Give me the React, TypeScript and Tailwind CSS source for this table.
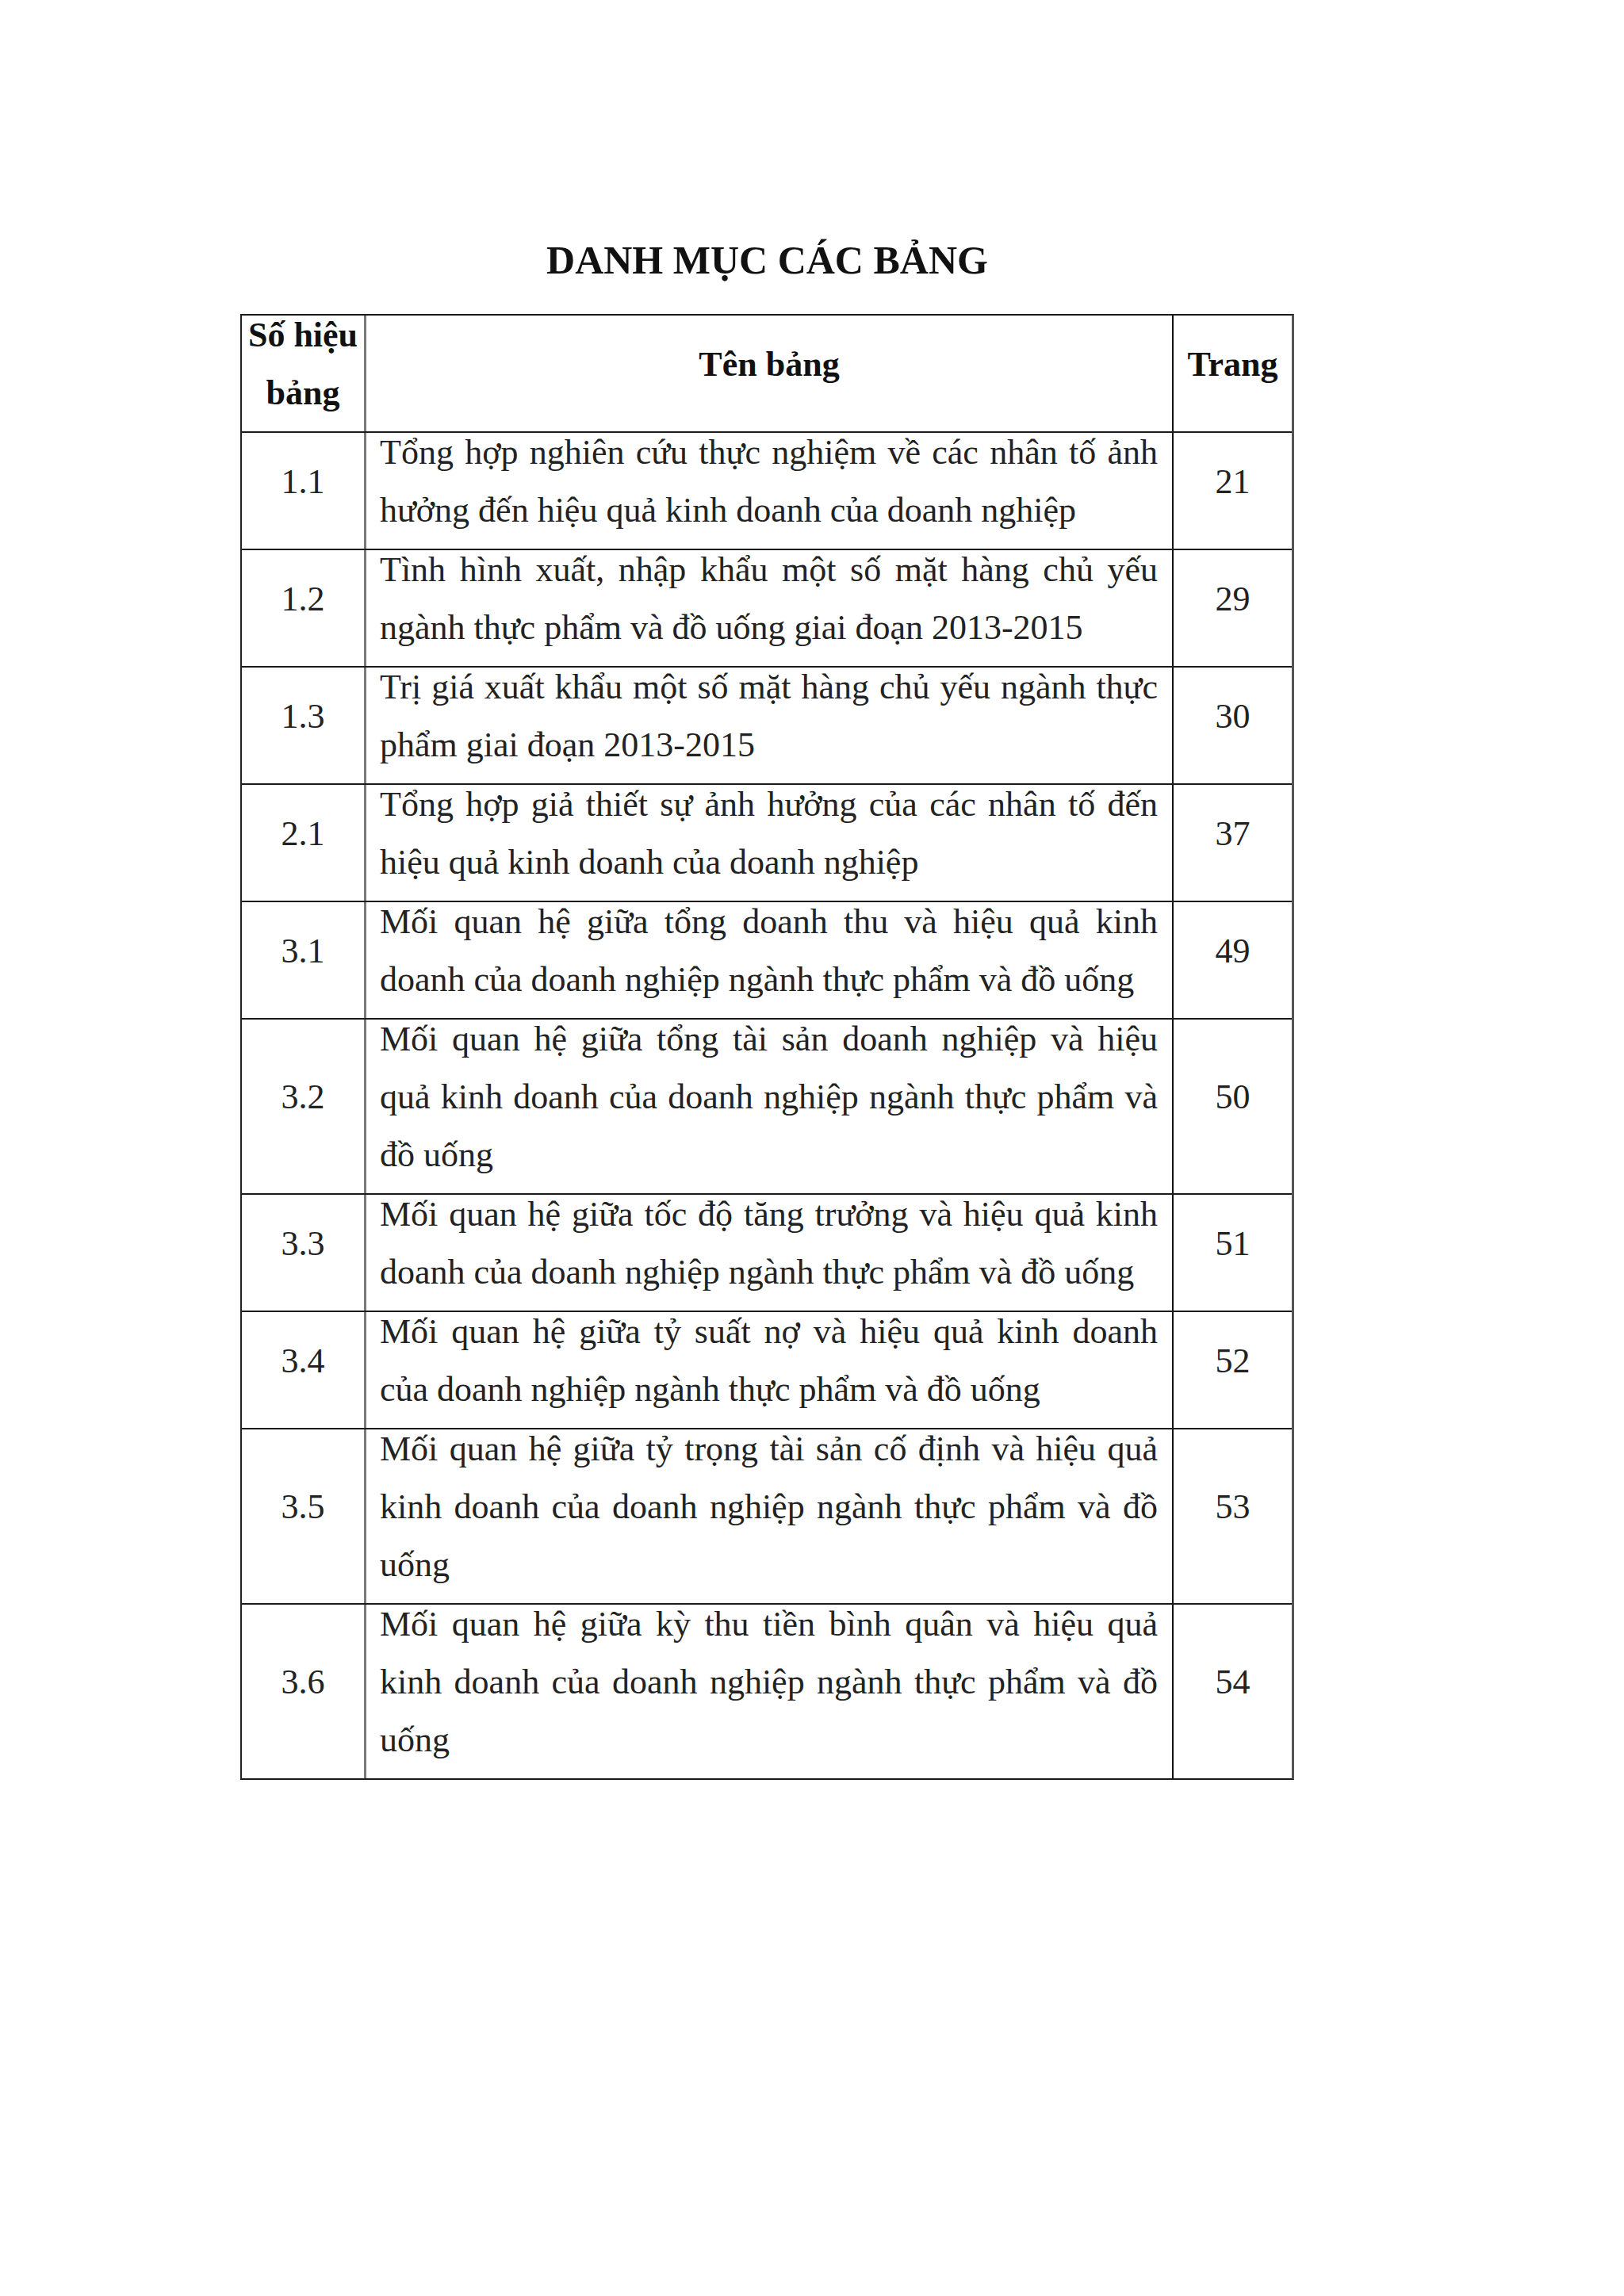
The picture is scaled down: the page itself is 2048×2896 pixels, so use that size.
const rows = [
  {
    no: "1.1",
    page: "21",
    lines: [
      "Tổng hợp nghiên cứu thực nghiệm về các nhân tố ảnh",
      "hưởng đến hiệu quả kinh doanh của doanh nghiệp",
    ],
  },
  {
    no: "1.2",
    page: "29",
    lines: [
      "Tình hình xuất, nhập khẩu một số mặt hàng chủ yếu",
      "ngành thực phẩm và đồ uống giai đoạn 2013-2015",
    ],
  },
  {
    no: "1.3",
    page: "30",
    lines: [
      "Trị giá xuất khẩu một số mặt hàng chủ yếu ngành thực",
      "phẩm giai đoạn 2013-2015",
    ],
  },
  {
    no: "2.1",
    page: "37",
    lines: [
      "Tổng hợp giả thiết sự ảnh hưởng của các nhân tố đến",
      "hiệu quả kinh doanh của doanh nghiệp",
    ],
  },
  {
    no: "3.1",
    page: "49",
    lines: [
      "Mối quan hệ giữa tổng doanh thu và hiệu quả kinh",
      "doanh của doanh nghiệp ngành thực phẩm và đồ uống",
    ],
  },
  {
    no: "3.2",
    page: "50",
    lines: [
      "Mối quan hệ giữa tổng tài sản doanh nghiệp và hiệu",
      "quả kinh doanh của doanh nghiệp ngành thực phẩm và",
      "đồ uống",
    ],
  },
  {
    no: "3.3",
    page: "51",
    lines: [
      "Mối quan hệ giữa tốc độ tăng trưởng và hiệu quả kinh",
      "doanh của doanh nghiệp ngành thực phẩm và đồ uống",
    ],
  },
  {
    no: "3.4",
    page: "52",
    lines: [
      "Mối quan hệ giữa tỷ suất nợ và hiệu quả kinh doanh",
      "của doanh nghiệp ngành thực phẩm và đồ uống",
    ],
  },
  {
    no: "3.5",
    page: "53",
    lines: [
      "Mối quan hệ giữa tỷ trọng tài sản cố định và hiệu quả",
      "kinh doanh của doanh nghiệp ngành thực phẩm và đồ",
      "uống",
    ],
  },
  {
    no: "3.6",
    page: "54",
    lines: [
      "Mối quan hệ giữa kỳ thu tiền bình quân và hiệu quả",
      "kinh doanh của doanh nghiệp ngành thực phẩm và đồ",
      "uống",
    ],
  },
];

// one Word-style line: text sits at the top, extra spacing below
function Line({ children, justify }: { children: React.ReactNode; justify?: boolean }) {
  return (
    <div
      className={
        "h-[73px] leading-[50px] whitespace-nowrap " +
        (justify ? "text-justify [text-align-last:justify]" : "")
      }
    >
      {children}
    </div>
  );
}

export default function App() {
  return (
    <div
      className="min-h-[2896px] w-[2048px] bg-white text-[#222] pl-[303px] pt-[300px]"
      style={{ fontFamily: '"Liberation Serif", "Times New Roman", serif' }}
    >
      <div className="w-[1329px]">
        <h1 className="text-center text-[50px] leading-[56px] font-bold text-[#111] mb-[40px]">
          DANH MỤC CÁC BẢNG
        </h1>

        <div className="border-t-2 border-l-2 border-b-2 border-r-[3px] border-t-[#1a1a1a] border-l-[#222] border-b-[#1a1a1a] border-r-[#555] text-[44px]">
          {/* header */}
          <div className="grid grid-cols-[157px_1018px_149px] border-b-2 border-[#1a1a1a] font-bold text-[#111]">
            <div className="border-r-[3px] border-[#7a7a7a] text-center">
              <Line>Số hiệu</Line>
              <Line>bảng</Line>
            </div>
            <div className="border-r-2 border-[#111] flex items-center justify-center">
              <Line>Tên bảng</Line>
            </div>
            <div className="flex items-center justify-center">
              <Line>Trang</Line>
            </div>
          </div>

          {rows.map((r, i) => (
            <div
              key={r.no}
              className={
                "grid grid-cols-[157px_1018px_149px] " +
                (i < rows.length - 1 ? "border-b-2 border-[#1a1a1a]" : "")
              }
            >
              <div className="border-r-[3px] border-[#7a7a7a] flex items-center justify-center">
                <Line>{r.no}</Line>
              </div>
              <div className="border-r-2 border-[#111] pl-[17px] pr-[18px]">
                {r.lines.map((l, j) => (
                  <Line key={j} justify={j < r.lines.length - 1}>
                    {l}
                  </Line>
                ))}
              </div>
              <div className="flex items-center justify-center">
                <Line>{r.page}</Line>
              </div>
            </div>
          ))}
        </div>
      </div>
    </div>
  );
}
